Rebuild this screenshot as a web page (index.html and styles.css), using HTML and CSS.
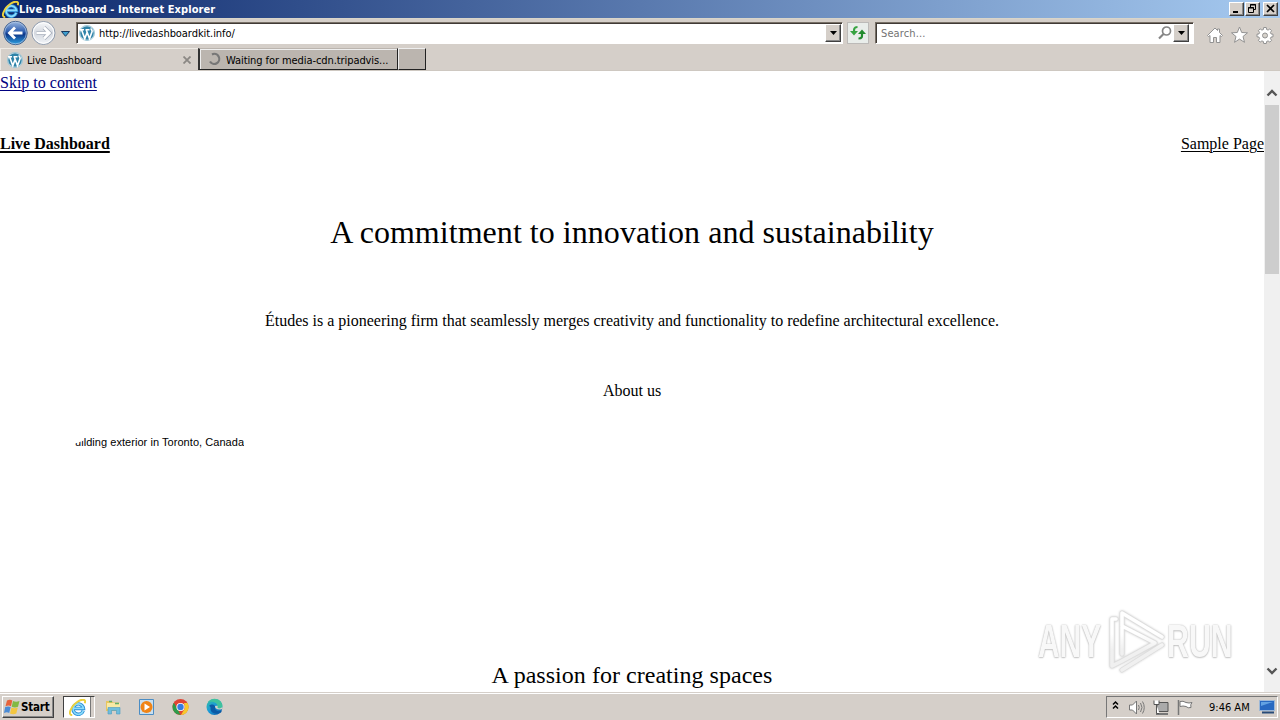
FILE: index.html
```html
<!DOCTYPE html>
<html lang="en">
<head>
<meta charset="utf-8">
<title>Live Dashboard</title>
<link rel="stylesheet" href="styles.css">
</head>
<body>
<svg width="0" height="0" class="defs">
  <defs>
    <linearGradient id="blue" x1="0" y1="0" x2="0" y2="1"><stop offset="0" stop-color="#9db9e0"/><stop offset=".45" stop-color="#2c5cae"/><stop offset=".55" stop-color="#0d3688"/><stop offset="1" stop-color="#2fa4e4"/></linearGradient>
    <linearGradient id="pale" x1="0" y1="0" x2="0" y2="1"><stop offset="0" stop-color="#f8f9fb"/><stop offset=".5" stop-color="#d4d8df"/><stop offset="1" stop-color="#f3f6fa"/></linearGradient>
    <linearGradient id="edge" x1="0" y1="0" x2="1" y2="1"><stop offset="0" stop-color="#35c1a0"/><stop offset=".45" stop-color="#1b9bd8"/><stop offset="1" stop-color="#0b57a8"/></linearGradient>
    <linearGradient id="mark" gradientUnits="userSpaceOnUse" x1="0" y1="26" x2="0" y2="42"><stop offset="0" stop-color="#fff"/><stop offset="1" stop-color="#f0f0f0"/></linearGradient>
    <symbol id="ie" viewBox="0 0 16 16">
      <path d="M13.400 11A4.900 4.900 0 1 1 13.600 8.900H4.500" fill="none" stroke="#2a8ed6" stroke-width="3.200"/>
      <path d="M13.400 11A4.900 4.900 0 1 1 13.600 8.900H4.500" fill="none" stroke="#8bdcfb" stroke-width="1.600"/>
      <path d="M3 15C-1.500 15.500 1.500 7 8 2.600 12-.2 16.500-.2 14.800 4" fill="none" stroke="#ecd03c" stroke-width="1.800"/>
    </symbol>
    <symbol id="wp" viewBox="0 0 16 16">
      <circle cx="8" cy="8" r="7.600" fill="#e5f0f4" stroke="#8fbfd2" stroke-width=".8"/>
      <circle cx="8" cy="8" r="6.800" fill="#2f83a8"/>
      <path d="M1 4.800h4M6.500 4.800h4M2.600 5l3.200 8.600L8.200 7M7.300 5l3.200 8.600 2.600-7.100c.2-1.400-1.200-1.500-.9-3.200" fill="none" stroke="#fff" stroke-width="1.600"/>
    </symbol>
  </defs>
</svg>
<div class="screen">
  <header class="titlebar">
    <svg class="title-icon" width="17" height="17"><use href="#ie"/></svg>
    <span class="title">Live Dashboard - Internet Explorer</span>
    <div class="window-buttons">
      <span class="wbtn"><svg width="13" height="11"><path d="M3 9h5" stroke="#000" stroke-width="2"/></svg></span>
      <span class="wbtn gap"><svg width="13" height="11"><path d="M4.500 4V1.500h5v5H8M4 2h6M2.500 4.500h5v5h-5zM2 5h6" fill="none" stroke="#000"/></svg></span>
      <span class="wbtn"><svg width="13" height="11"><path d="M3 2l7 7M10 2L3 9" stroke="#000" stroke-width="1.700"/></svg></span>
    </div>
  </header>
  <nav class="navbar">
    <svg class="arrows" width="74" height="28" viewBox="0 0 74 28">
      <circle cx="15.500" cy="15" r="11.700" fill="url(#blue)" stroke="#47638e"/>
      <circle cx="15.500" cy="15" r="10.800" fill="none" stroke="#b5cce8" stroke-width=".7"/>
      <path d="M22.500 15H10M15 9.500L9.500 15l5.500 5.500" fill="none" stroke="#fff" stroke-width="2.800"/>
      <circle cx="43.500" cy="15" r="11.500" fill="url(#pale)" stroke="#8f9bad"/>
      <circle cx="43.500" cy="15" r="10.300" fill="none" stroke="#fff"/>
      <path d="M36.500 15H49M44 9.500l5.500 5.500-5.500 5.500" fill="none" stroke="#a3abb8" stroke-width="4"/>
      <path d="M36.500 15H49M44 9.500l5.500 5.500-5.500 5.500" fill="none" stroke="#fff" stroke-width="2.600"/>
      <path d="M61.500 13.500h8l-4 4.800z" fill="#3e9fce" stroke="#18385e"/>
    </svg>
    <div class="field address">
      <svg width="16" height="16"><use href="#wp"/></svg>
      <span class="url">http://livedashboardkit.info/</span>
      <span class="drop"><svg width="7" height="4"><path d="M0 0h7L3.500 4z"/></svg></span>
    </div>
    <span class="refresh"><svg width="18" height="16" viewBox="0 0 18 16"><path d="M8.500 2C5 2 5 4 5 7" fill="none" stroke="#36a340" stroke-width="2.200"/><path d="M1 6h8L5 10.500z" fill="#36a340"/><path d="M9.500 13.500c4 0 3.500-2 3.500-5" fill="none" stroke="#238b2e" stroke-width="2.200"/><path d="M9 9h8l-4-4.500z" fill="#238b2e"/></svg></span>
    <div class="field search">
      <span class="placeholder">Search...</span>
      <svg width="14" height="14"><circle cx="8.500" cy="5" r="4" fill="none" stroke="#858585" stroke-width="1.700"/><path d="M5.500 8L1 12.500" stroke="#858585" stroke-width="2.200"/></svg>
      <span class="drop"><svg width="7" height="4"><path d="M0 0h7L3.500 4z"/></svg></span>
    </div>
    <svg class="tools" width="68" height="20" viewBox="0 0 68 20" fill="#fff" stroke="#929292">
      <path d="M1.500 10.500L9 3l2.500 2.500V4h2v3.500l3 3-1 1-1.500-1V17.500h-3.500v-5h-3v5H4v-7l-1.500 1z"/>
      <path d="M33.500 2l2.200 5.500 5.800.3-4.500 3.700 1.500 5.800-5-3.200-5 3.200 1.500-5.800-4.500-3.700 5.800-.3z"/>
      <path d="M56.700 2.500h2.600l.3 2 1.500.6 1.700-1.200 1.800 1.800-1.200 1.700.6 1.500 2 .3v2.600l-2 .3-.6 1.500 1.200 1.700-1.800 1.800-1.700-1.200-1.500.6-.3 2h-2.600l-.3-2-1.500-.6-1.700 1.200-1.800-1.800 1.200-1.700-.6-1.500-2-.3V9.200l2-.3.6-1.500-1.200-1.700 1.800-1.800 1.700 1.200 1.500-.6z" transform="translate(1 0)"/>
      <circle cx="59" cy="10.500" r="2.500" fill="#d6d2cb"/>
    </svg>
  </nav>
  <div class="tabs">
    <div class="tab active">
      <svg width="16" height="16"><use href="#wp"/></svg>
      <span class="tab-name first">Live Dashboard</span>
      <svg class="close" width="8" height="8"><path d="M.5.5l7 7M7.500.5l-7 7" stroke="#8b8884" stroke-width="1.800"/></svg>
    </div>
    <div class="tab waiting">
      <svg width="14" height="14"><path d="M5 2.400A5 5 0 1 1 3 9.500" fill="none" stroke="#777" stroke-width="2.200"/></svg>
      <span class="tab-name second">Waiting for media-cdn.tripadvis...</span>
    </div>
    <div class="tab blank"></div>
  </div>
  <div class="viewport">
    <main class="page">
      <a class="skip"><span>Skip to content</span></a>
      <div class="site-header"><b class="site-name">Live Dashboard</b><a class="sample">Sample Page</a></div>
      <h1 class="heading"><span>A commitment to innovation and sustainability</span></h1>
      <p class="intro">Études is a pioneering firm that seamlessly merges creativity and functionality to redefine architectural excellence.</p>
      <p class="about">About us</p>
      <div class="alt"><span>uilding exterior in Toronto, Canada</span></div>
      <h2 class="subheading">A passion for creating spaces</h2>
    </main>
    <aside class="scrollbar">
      <svg class="up" width="12" height="8"><path d="M1.500 6.500L6 2l4.500 4.500" fill="none" stroke="#555" stroke-width="2.400"/></svg>
      <div class="thumb"></div>
      <svg class="down" width="12" height="8"><path d="M1.500 1.500L6 6l4.500-4.500" fill="none" stroke="#555" stroke-width="2.400"/></svg>
    </aside>
    <div class="watermark">
      <span class="any">ANY</span>
      <svg width="60" height="66" viewBox="0 0 60 66" fill="none" stroke-linejoin="round" stroke-linecap="round">
        <g stroke="#dedede" stroke-width="5"><path d="M15 46V5l40 24M15 18l33 17-33 18M9 11H5v47l10-5M15 62l40-25"/></g>
        <g stroke="url(#mark)" stroke-width="3.500"><path d="M15 46V5l40 24M15 18l33 17-33 18M9 11H5v47l10-5M15 62l40-25"/></g>
      </svg>
      <span class="run">RUN</span>
    </div>
  </div>
  <footer class="taskbar">
    <div class="start">
      <svg width="16" height="16" viewBox="0 0 16 16"><path d="M3 1.500q3-1.500 5.300 0L7 7.300q-2.300-1.400-5.500 0z" fill="#e6623a"/><path d="M9 2q3 1.500 6.500 0L14 7.800q-3 1.200-6.300 0z" fill="#82b943"/><path d="M1.200 8.100q3-1.400 5.500 0l-1.500 6q-2.200-1.500-5.200 0z" fill="#4b8bd5"/><path d="M7.500 8.600q3 1.500 6.300 0l-1.500 5.900q-3 1.500-6.300 0z" fill="#f3c640"/></svg>
      <b>Start</b>
    </div>
    <div class="task-ie"><div class="task-face"><svg width="17" height="17"><use href="#ie"/></svg></div></div>
    <svg class="apps" width="120" height="20" viewBox="0 0 120 20">
      <path d="M1 4h6l1 1.500h6V14H1z" fill="#e7c65e"/><path d="M2 6h13v6H2z" fill="#f9e9a5"/><path d="M4 4.500h3M10 6.500h4" stroke="#64ad68" stroke-width="1.500"/><path d="M3 17v-6.500h12V17h-3.500v-3.500h-5V17z" fill="#70bddc" stroke="#4b9bc0" stroke-width=".6"/>
      <path d="M34.500 2.500h14v15h-14z" fill="#c9dfef" stroke="#4b8dc4"/><circle cx="41.500" cy="10" r="6" fill="#f08416"/><path d="M39.500 6.500l5.500 3.500-5.500 3.500z" fill="#fff"/>
      <circle cx="75.500" cy="10" r="8" fill="#e04434"/><path d="M68.500 6l5 8.500L72 17.200A8 8 0 0 1 68.500 6" fill="#2d9b4a"/><path d="M76 18l4-7-1-5h3.500A8 8 0 0 1 75 18z" fill="#f7c92d"/><path d="M69 6l4.500 8 2 4a8 8 0 0 1-6.500-12" fill="#2d9b4a"/><circle cx="75.500" cy="10" r="4.100" fill="#fff"/><circle cx="75.500" cy="10" r="3.200" fill="#367be2"/>
      <circle cx="109.500" cy="10" r="8" fill="url(#edge)"/><path d="M104 9c3-3 7-1 6 2 0 3 4 4 7 2.500l-1 2c-5 3-11 0-10.500-4 .3-1.500-.5-2.500-1.500-2.500z" fill="#0b5aa5"/><path d="M110 9c0 3 3 4.500 7.500 3V8z" fill="#d6d2cb"/><path d="M103 5c5-6 14-3 14.500 4 0 2-3 3-5 2 1-5-4-7-9.500-6" fill="#3fc29e"/>
    </svg>
    <div class="tray">
      <svg width="90" height="18" viewBox="0 0 90 18" fill="none">
        <path d="M6 6.500l2.500-2.500L11 6.500M6 10.500L8.500 8l2.500 2.500" stroke="#000" stroke-width="1.500"/>
        <path d="M22.500 7h3l4-4v13l-4-4h-3z" fill="#fff" stroke="#777"/><path d="M31.500 7q1.500 2.500 0 5M33.500 5q3 4.500 0 9M35.500 3.500q3.500 6 0 12" stroke="#777"/>
        <path d="M50 4.500h11v9H50z" fill="#aaa" stroke="#555"/><path d="M49 16h12" stroke="#777" stroke-width="2"/><path d="M47 2.500v4h5v-4M49.500 6.500v9h3" fill="#fff" stroke="#555"/>
        <path d="M71.500 2v15" stroke="#777" stroke-width="1.500"/><path d="M73 3.500q3-1 6 1 3 1 6 0-2 2-1 5-3 1-5-1-3-1-6 0z" fill="#fff" stroke="#777"/>
      </svg>
      <span class="clock">9:46 AM</span>
      <svg class="desktop" width="16" height="14"><path d="M.5.5h15v10H.5z" fill="#2869c1" stroke="#9cb8d8"/><path d="M2 2h12L2 6z" fill="#62a2e2"/><path d="M3 12.500h12" stroke="#274b78" stroke-width="2"/></svg>
    </div>
  </footer>
</div>
</body>
</html>
```
FILE: styles.css
```css
* { box-sizing: border-box; }
body { margin: 0; overflow: hidden; font: 11px "DejaVu Sans Condensed", "DejaVu Sans", sans-serif; font-stretch: condensed; color: #000; }
svg { display: block; flex: none; }
.defs { position: absolute; }
.screen { width: 1280px; height: 720px; display: flex; flex-direction: column; background: #d5cfc9; white-space: nowrap; }
.titlebar { height: 18px; display: flex; align-items: center; background: linear-gradient(90deg, #0c286c, #a6caf0); color: #fff; padding: 0 2px; flex: none; }
.title { font-weight: bold; letter-spacing: .08px; }
.window-buttons { margin-left: auto; display: flex; }
.wbtn { width: 15px; height: 14px; background: #d5cfc9; border: 1px solid; border-color: #fff #404040 #404040 #fff; box-shadow: inset -1px -1px #888; margin-left: 1px; }
.wbtn.gap { margin-right: 2px; }
.navbar { height: 30px; display: flex; align-items: flex-start; flex: none; border-top: 1px solid #d9d5c9; }
.arrows { margin-top: -1px; }
.field { height: 22px; margin: 3px 0 0 2px; border: 1px solid; border-color: #776f66 #fff #fff #776f66; box-shadow: inset 1px 1px #403a35; background: #fff; display: flex; align-items: center; padding-left: 2px; }
.address { width: 767px; }
.url { margin-left: 4px; letter-spacing: -.06px; }
.drop { width: 16px; height: 18px; display: flex; align-items: center; justify-content: center; background: #d5cfc9; border: 1px solid; border-color: #fff #404040 #404040 #fff; box-shadow: inset -1px -1px #888; margin-left: auto; margin-right: 1px; }
.refresh { width: 22px; height: 22px; margin: 3px 0 0 4px; border: 1px solid #bcbab8; background: #e9edea; display: flex; align-items: center; justify-content: center; }
.search { width: 319px; margin-left: 6px; padding-left: 5px; }
.placeholder { color: #737373; margin-right: auto; letter-spacing: .12px; }
.search .drop { margin-left: 1px; margin-right: 4px; }
.tools { margin: 6px 0 0 12px; }
.tabs { height: 23px; flex: none; display: flex; border-bottom: 1px solid #cec8c1; }
.tab { height: 22px; display: flex; align-items: center; }
.tab-name { padding-top: 2px; }
.active { width: 198px; padding-left: 6px; border: 1px solid #eeeae5; border-width: 1px 0 0 1px; }
.tab-name.first { margin-left: 4px; letter-spacing: -.17px; }
.close { margin: 0 7px 0 auto; }
.waiting { width: 200px; background: #bbb5af; border: 1px solid; border-width: 1px 1px 1px 2px; border-color: #bbb5af #222 #222 #333; padding-left: 7px; box-shadow: inset 1px 1px #eee; }
.tab-name.second { margin-left: 5px; letter-spacing: -.08px; }
.blank { width: 28px; background: #bbb5af; border: 1px solid; border-color: #eee #222 #222 #eee; }
.viewport { height: 621px; flex: none; display: flex; position: relative; background: #fff; overflow: hidden; }
.page { width: 1264px; font: 16px/18px "Liberation Serif", serif; padding-top: 3px; }
.skip { display: block; color: #000080; }
.skip span, .sample { text-decoration: underline; text-underline-offset: 2px; text-decoration-thickness: 1px; }
.site-header { display: flex; justify-content: space-between; margin-top: 43px; }
.site-name { text-decoration: underline; text-decoration-thickness: 2px; text-underline-offset: 2px; }
.heading { font-size: 32px; line-height: 37px; font-weight: normal; margin: 61px 0 0; text-align: center; letter-spacing: .04px; }
.intro { margin: 61px 0 0; text-align: center; }
.about { margin: 52px 0 0; text-align: center; }
.alt { margin: 35px 0 0 75px; height: 14px; font: 11px/14px "Liberation Sans", sans-serif; letter-spacing: .05px; }
.alt span { display: inline-block; clip-path: polygon(0 60%, 9px 40%, 9px 0, 100% 0, 100% 100%, 0 100%); }
.subheading { font-size: 24px; line-height: 28px; font-weight: normal; margin: 212px 0 0; text-align: center; letter-spacing: .03px; }
.scrollbar { width: 16px; background: #f0f0f0; display: flex; flex-direction: column; align-items: center; }
.up { margin: 18px 0 8px; }
.thumb { width: 14px; height: 169px; background: #cdcdcd; }
.down { margin: auto 0 17px; }
.watermark { position: absolute; left: 1038px; top: 537px; height: 66px; display: flex; align-items: center; font: bold 46px/60px "Liberation Sans Narrow", "Liberation Sans", sans-serif; color: #f8f8f8; text-shadow: 0 0 2px #aaa, 0 1px 2px #ccc; }
.watermark span { display: block; transform-origin: left; width: 66px; }
.any { transform: scaleX(.65); }
.run { transform: scaleX(.66); }
.watermark svg { filter: drop-shadow(0 0 1px #ccc); margin: 0 0 0 3px; }
.taskbar { height: 28px; flex: none; display: flex; align-items: flex-start; border-top: 1px solid #d5cfc9; box-shadow: inset 0 1px #fff; padding: 3px 2px 0; }
.start { width: 52px; height: 22px; display: flex; align-items: center; gap: 1px; padding-left: 1px; border: 1px solid; border-color: #fff #404040 #404040 #fff; box-shadow: inset -1px -1px #888; }
.start b { font-size: 11.5px; letter-spacing: -.2px; }
.task-ie { width: 32px; height: 22px; margin-left: 9px; border: 1px solid; border-color: #404040 #fff #fff #404040; background: #d5cfc9; }
.task-face { width: 27px; height: 20px; background: #fff; display: flex; align-items: center; justify-content: center; border-right: 1px solid #777; }
.apps { margin: 1px 0 0 10px; }
.tray { width: 172px; height: 22px; margin-left: auto; border: 1px solid; border-color: #777 #fff #fff #777; display: flex; align-items: center; }
.clock { margin-left: 12px; }
.desktop { margin-left: auto; margin-right: 2px; }
```
